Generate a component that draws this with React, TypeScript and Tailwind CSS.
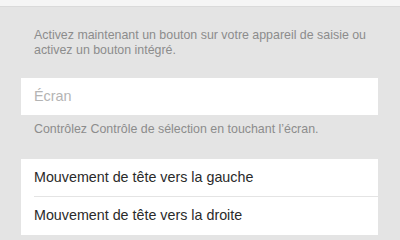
export default function App() {
  return (
    <div
      className="w-[400px] h-[240px] overflow-hidden bg-[#e4e4e4]"
      style={{ fontFamily: '"Liberation Sans", Arial, sans-serif' }}
    >
      <div className="h-[7px] bg-[#f5f5f5] border-b border-[#dadada]" />

      <div className="pl-[34px] pr-[28px] pt-[21px] text-[12.4px] leading-[15px] text-[#8c8c8c]">
        Activez maintenant un bouton sur votre appareil de saisie ou activez un bouton intégré.
      </div>

      <div className="mt-[20px] ml-[21px] mr-[22px] h-[37px] bg-white flex items-center pl-[13px]">
        <span className="text-[14.4px] text-[#b4b4b4]">Écran</span>
      </div>

      <div className="pl-[34px] pt-[7px] text-[12.4px] leading-[15px] text-[#8c8c8c]">
        Contrôlez Contrôle de sélection en touchant l’écran.
      </div>

      <div className="mt-[22px] ml-[21px] mr-[22px] bg-white">
        <div className="h-[37px] flex items-center pl-[13px] text-[14.3px] text-[#2a2a2a]">
          Mouvement de tête vers la gauche
        </div>
        <div className="ml-[13px] border-t border-[#e4e4e4]" />
        <div className="h-[38px] flex items-center pl-[13px] text-[14.3px] text-[#2a2a2a]">
          Mouvement de tête vers la droite
        </div>
      </div>
    </div>
  );
}
